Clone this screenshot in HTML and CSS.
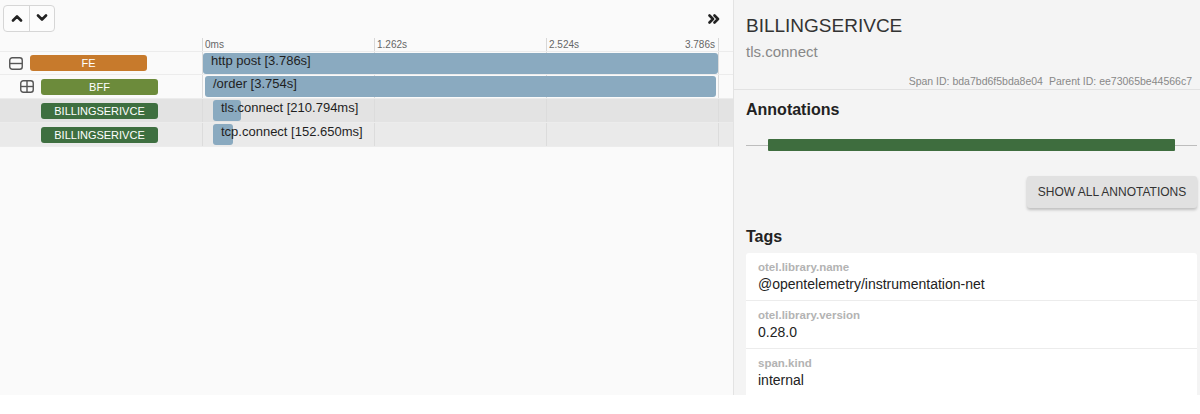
FILE: index.html
```html
<!DOCTYPE html>
<html lang="en">
<head>
    <meta charset="UTF-8">
    <title>Trace</title>
    <link rel="stylesheet" href="styles.css">
</head>
<body>
    <div class="app">
        <section class="trace">
            <div class="toolbar">
                <div class="nav-group">
                    <button class="nav-btn" title="Previous">
                        <svg width="12" height="8" viewBox="0 0 12 8"><polyline points="2,6.5 6,2.5 10,6.5" /></svg>
                    </button>
                    <button class="nav-btn" title="Next">
                        <svg width="12" height="8" viewBox="0 0 12 8"><polyline points="2,1.5 6,5.5 10,1.5" /></svg>
                    </button>
                </div>
                <button class="collapse-btn" title="Collapse">
                    <svg width="12" height="10" viewBox="0 0 12 10"><polyline points="1.5,1.5 5,5 1.5,8.5" /><polyline points="6.5,1.5 10,5 6.5,8.5" /></svg>
                </button>
            </div>

            <div class="ruler">
                <div class="ruler-spacer"></div>
                <div class="ruler-ticks">
                    <div class="tick"><span>0ms</span></div>
                    <div class="tick"><span>1.262s</span></div>
                    <div class="tick tick-last"><span>2.524s</span><span>3.786s</span></div>
                </div>
            </div>

            <div id="rows"></div>
        </section>

        <aside class="detail">
            <div class="detail-head">
                <h1 class="detail-title">BILLINGSERIVCE</h1>
                <div class="detail-sub">tls.connect</div>
                <div class="detail-ids">
                    <span>Span ID: bda7bd6f5bda8e04</span>
                    <span>Parent ID: ee73065be44566c7</span>
                </div>
            </div>

            <h2 class="section-title">Annotations</h2>
            <div class="annot-track">
                <div class="annot-bar"></div>
            </div>
            <div class="annot-actions">
                <button class="show-btn">SHOW ALL ANNOTATIONS</button>
            </div>

            <h2 class="section-title tags-title">Tags</h2>
            <div class="tags">
                <div class="tag">
                    <div class="tag-key">otel.library.name</div>
                    <div class="tag-value">@opentelemetry/instrumentation-net</div>
                </div>
                <div class="tag">
                    <div class="tag-key">otel.library.version</div>
                    <div class="tag-value">0.28.0</div>
                </div>
                <div class="tag">
                    <div class="tag-key">span.kind</div>
                    <div class="tag-value">internal</div>
                </div>
            </div>
        </aside>
    </div>

    <script>
        // duracao total do trace em ms
        const total = 3786;
        const trackWidth = 516;

        const spans = [
            { service: 'FE', color: 'fe', depth: 0, toggle: 'minus', name: 'http post [3.786s]', start: 0, dur: 3786 },
            { service: 'BFF', color: 'bff', depth: 1, toggle: 'plus', name: '/order [3.754s]', start: 16, dur: 3754 },
            { service: 'BILLINGSERIVCE', color: 'billing', depth: 1, toggle: null, name: 'tls.connect [210.794ms]', start: 74, dur: 206, state: 'selected' },
            { service: 'BILLINGSERIVCE', color: 'billing', depth: 1, toggle: null, name: 'tcp.connect [152.650ms]', start: 74, dur: 147, state: 'hover' }
        ];

        const icons = {
            minus: '<svg width="14" height="13" viewBox="0 0 14 13"><rect x="0.75" y="0.75" width="12.5" height="11.5" rx="2.5"/><line x1="1" y1="6.5" x2="13" y2="6.5"/></svg>',
            plus: '<svg width="14" height="13" viewBox="0 0 14 13"><rect x="0.75" y="0.75" width="12.5" height="11.5" rx="2.5"/><line x1="1" y1="6.5" x2="13" y2="6.5"/><line x1="7" y1="1" x2="7" y2="12"/></svg>'
        };

        function px(ms) {
            return Math.round(ms / total * (trackWidth - 1));
        }

        document.getElementById('rows').innerHTML = spans.map(s => `
            <div class="row ${s.state || ''}">
                <div class="row-label depth-${s.depth}">
                    <span class="tree-toggle">${s.toggle ? icons[s.toggle] : ''}</span>
                    <span class="service ${s.color}">${s.service}</span>
                </div>
                <div class="row-track">
                    <div class="bar" style="margin-left: ${px(s.start)}px; width: ${Math.max(px(s.dur), 20)}px">${s.name}</div>
                </div>
            </div>
        `).join('');
    </script>
</body>
</html>
```

FILE: styles.css
```css
* {
    margin: 0;
    padding: 0;
    box-sizing: border-box;
}

body {
    font-family: 'Liberation Sans', Arial, sans-serif;
    background: #ffffff;
    color: #222;
}

.app {
    display: flex;
    height: 395px;
}

/* painel da esquerda */
.trace {
    width: 734px;
    background: #fafafa;
    border-right: 1px solid #e3e3e3;
}

.toolbar {
    height: 38px;
    display: flex;
    align-items: center;
    justify-content: space-between;
    padding: 0 13px 0 3px;
}

.nav-group {
    display: flex;
    margin-top: -2px;
    border: 1px solid #d6d6d6;
    border-radius: 4px;
    background: #fcfcfc;
}

.nav-btn {
    width: 25px;
    height: 25px;
    border: none;
    background: transparent;
    display: flex;
    align-items: center;
    justify-content: center;
    cursor: pointer;
}

.nav-btn + .nav-btn {
    border-left: 1px solid #d6d6d6;
}

.nav-btn svg polyline,
.collapse-btn svg polyline {
    fill: none;
    stroke: #222;
    stroke-width: 2.6;
    stroke-linecap: round;
    stroke-linejoin: round;
}

.collapse-btn {
    border: none;
    background: transparent;
    display: flex;
    margin-top: 0;
    cursor: pointer;
}

.ruler {
    display: flex;
    height: 13px;
}

.ruler-spacer {
    width: 202px;
}

.ruler-ticks {
    display: flex;
    width: 517px;
    border-right: 1px solid #d8d8d8;
}

.tick {
    flex: 1;
    border-left: 1px solid #d8d8d8;
    font-size: 10px;
    line-height: 13px;
    color: #666;
    padding: 0 3px 0 2px;
}

.tick-last {
    display: flex;
    justify-content: space-between;
}

.row {
    display: flex;
    height: 24px;
    border-bottom: 1px solid #ececec;
    background: #fafafa;
}

.row:first-child {
    border-top: 1px solid #ececec;
}

.row.selected {
    background: #e3e3e3;
}

.row.hover {
    background: #eaeaea;
}

.row-label {
    width: 202px;
    display: flex;
    align-items: center;
    padding-left: 9px;
}

.row-label.depth-1 {
    padding-left: 20px;
}

.tree-toggle {
    width: 21px;
    height: 13px;
    display: flex;
}

.tree-toggle svg rect,
.tree-toggle svg line {
    fill: none;
    stroke: #555;
    stroke-width: 1.4;
}

.service {
    width: 117px;
    height: 16px;
    border-radius: 3px;
    color: #fff;
    font-size: 11px;
    line-height: 16px;
    text-align: center;
    text-transform: uppercase;
}

.service.fe {
    background: #c77a2c;
}

.service.bff {
    background: #6c8b3b;
}

.service.billing {
    background: #3e6f40;
}

.row-track {
    width: 531px;
    padding: 1px 14px 1px 1px;
    background-image: linear-gradient(to right, #dcdcdc 1px, transparent 1px);
    background-size: 172px 100%;
}

.bar {
    height: 21px;
    border-radius: 3px;
    background: #8aaac0;
    color: #1f1f1f;
    font-size: 13px;
    line-height: 15px;
    padding-left: 8px;
    white-space: nowrap;
}

/* painel de detalhes */
.detail {
    flex: 1;
    background: #f4f4f4;
    padding: 0 3px 0 12px;
    overflow: hidden;
}

.detail-head {
    margin-left: -12px;
    margin-right: -3px;
    padding: 14px 8px 1px 12px;
    border-bottom: 1px solid #e2e2e2;
}

.detail-title {
    font-size: 19px;
    font-weight: 400;
    line-height: 24px;
    color: #333;
}

.detail-sub {
    font-size: 15px;
    line-height: 20px;
    color: #888;
    margin-top: 4px;
}

.detail-ids {
    display: flex;
    justify-content: flex-end;
    gap: 6px;
    margin-top: 12px;
    font-size: 10.5px;
    line-height: 14px;
    color: #888;
}

.section-title {
    font-size: 16px;
    font-weight: 700;
    color: #222;
    margin-top: 11px;
}

.annot-track {
    height: 12px;
    margin-top: 20px;
    padding: 0 22px;
    background: linear-gradient(#bdbdbd, #bdbdbd) center / 100% 1px no-repeat;
}

.annot-bar {
    height: 12px;
    background: #3e6d3e;
    border-radius: 1px;
}

.annot-actions {
    display: flex;
    justify-content: flex-end;
    margin-top: 25px;
}

.show-btn {
    width: 170px;
    height: 32px;
    border: none;
    border-radius: 3px;
    background: #e1e1e1;
    box-shadow: 0 2px 3px rgba(0, 0, 0, 0.22);
    font-family: 'Liberation Sans', Arial, sans-serif;
    font-size: 12px;
    color: #333;
    cursor: pointer;
}

.tags-title {
    margin-top: 20px;
}

.tags {
    margin-top: 7px;
    background: #ffffff;
    border-radius: 3px 3px 0 0;
}

.tag {
    height: 48px;
    padding: 7px 12px 0;
    border-bottom: 1px solid #ececec;
}

.tag-key {
    font-size: 11.5px;
    font-weight: 700;
    color: #b3b3b3;
    line-height: 15px;
}

.tag-value {
    font-size: 14px;
    color: #222;
    line-height: 18px;
    margin-top: 0;
}
```
